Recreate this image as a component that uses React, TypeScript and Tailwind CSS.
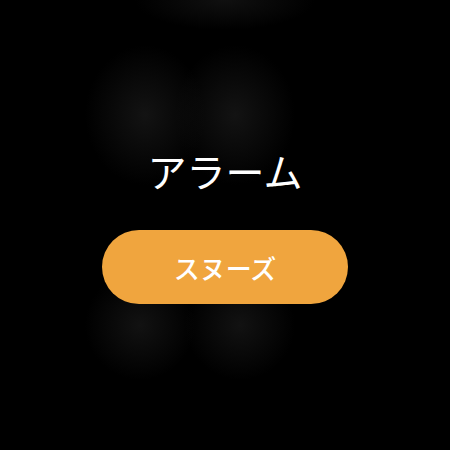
export default function App() {
  return (
    <div
      className="flex h-[450px] w-[450px] flex-col items-center bg-black bg-[radial-gradient(ellipse_60px_70px_at_145px_115px,#131313_0,transparent_100%),radial-gradient(ellipse_60px_70px_at_235px_115px,#131313_0,transparent_100%),radial-gradient(ellipse_55px_55px_at_140px_325px,#121212_0,transparent_100%),radial-gradient(ellipse_55px_55px_at_240px_325px,#121212_0,transparent_100%),radial-gradient(ellipse_90px_30px_at_225px_0px,#101010_0,transparent_100%)] pt-[147px]"
      style={{ fontFamily: '"Noto Sans CJK JP", "Noto Sans", sans-serif' }}
    >
      <h1 className="text-[39px] font-normal leading-[47px] text-white">アラーム</h1>
      <button className="mt-[36px] flex h-[74px] w-[246px] items-center justify-center rounded-full bg-[#f0a53e] text-[26px] font-medium text-white">
        スヌーズ
      </button>
    </div>
  );
}
